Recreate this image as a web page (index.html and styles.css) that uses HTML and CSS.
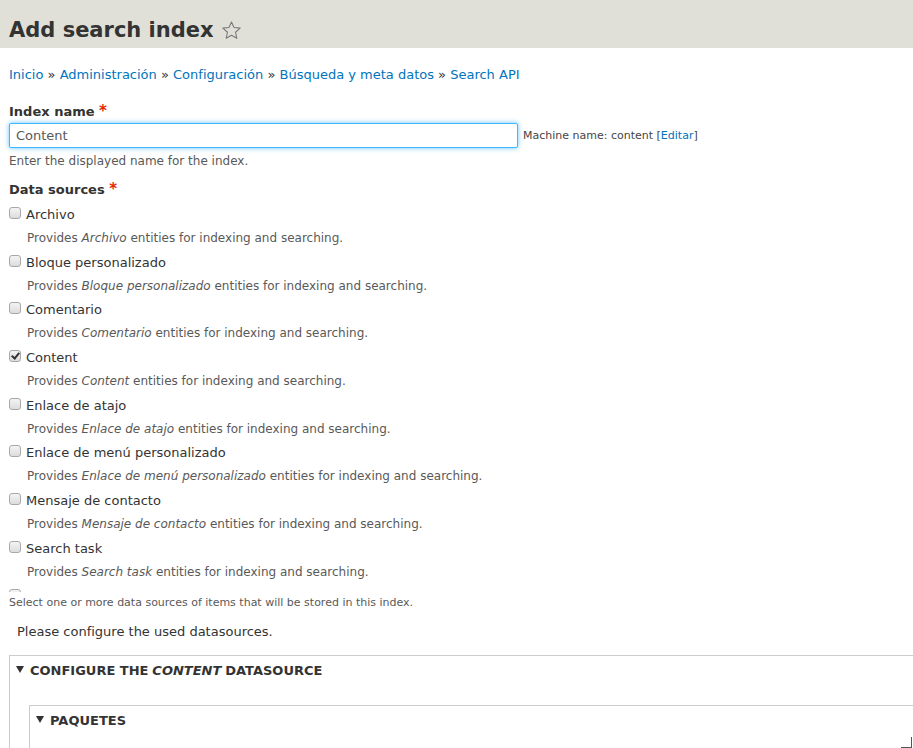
FILE: index.html
```html
<!DOCTYPE html>
<html lang="es">
<head>
<meta charset="utf-8">
<title>Add search index</title>
<link rel="stylesheet" href="styles.css">
</head>
<body>
<header class="header">
  <h1 class="page-title">Add search index
    <svg class="star" width="21" height="21" viewBox="0 0 24 24"><path d="M12 2.2l2.9 6.4 7 .7-5.3 4.7 1.5 6.9L12 17.4l-6.1 3.5 1.5-6.9L2.1 9.3l7-.7z" fill="none" stroke="#777" stroke-width="1.2" stroke-linejoin="round"/></svg>
  </h1>
</header>
<main class="page">
  <nav class="breadcrumb">
    <a href="#">Inicio</a> » <a href="#">Administración</a> » <a href="#">Configuración</a> » <a href="#">Búsqueda y meta datos</a> » <a href="#">Search API</a>
  </nav>

  <div class="form-item">
    <label class="label">Index name <span class="req">*</span></label>
    <div class="name-row">
      <input class="text-input" type="text" value="Content">
      <span class="machine">Machine name: content [<a href="#">Editar</a>]</span>
    </div>
    <div class="desc">Enter the displayed name for the index.</div>
  </div>

  <div class="form-item">
    <label class="label">Data sources <span class="req">*</span></label>
    <div class="checkboxes">
      <div class="cb-item"><label class="cb-label"><input type="checkbox"> Archivo</label><div class="cb-desc">Provides <em>Archivo</em> entities for indexing and searching.</div></div>
      <div class="cb-item"><label class="cb-label"><input type="checkbox"> Bloque personalizado</label><div class="cb-desc">Provides <em>Bloque personalizado</em> entities for indexing and searching.</div></div>
      <div class="cb-item"><label class="cb-label"><input type="checkbox"> Comentario</label><div class="cb-desc">Provides <em>Comentario</em> entities for indexing and searching.</div></div>
      <div class="cb-item"><label class="cb-label"><input type="checkbox" checked> Content</label><div class="cb-desc">Provides <em>Content</em> entities for indexing and searching.</div></div>
      <div class="cb-item"><label class="cb-label"><input type="checkbox"> Enlace de atajo</label><div class="cb-desc">Provides <em>Enlace de atajo</em> entities for indexing and searching.</div></div>
      <div class="cb-item"><label class="cb-label"><input type="checkbox"> Enlace de menú personalizado</label><div class="cb-desc">Provides <em>Enlace de menú personalizado</em> entities for indexing and searching.</div></div>
      <div class="cb-item"><label class="cb-label"><input type="checkbox"> Mensaje de contacto</label><div class="cb-desc">Provides <em>Mensaje de contacto</em> entities for indexing and searching.</div></div>
      <div class="cb-item"><label class="cb-label"><input type="checkbox"> Search task</label><div class="cb-desc">Provides <em>Search task</em> entities for indexing and searching.</div></div>
      <div class="cb-item"><label class="cb-label"><input type="checkbox" aria-label="Más"></label></div>
    </div>
    <div class="desc small">Select one or more data sources of items that will be stored in this index.</div>
  </div>

  <p class="notice">Please configure the used datasources.</p>

  <fieldset class="fs">
    <div class="legend"><span class="tri"></span>CONFIGURE THE <em>CONTENT</em> DATASOURCE</div>
    <fieldset class="fs inner">
      <div class="legend"><span class="tri"></span>PAQUETES</div>
      <span class="grip"></span>
    </fieldset>
  </fieldset>
</main>
</body>
</html>
```

FILE: styles.css
```css
html, body {
  margin: 0;
  padding: 0;
  overflow: hidden;
}
body {
  font-family: "DejaVu Sans", Verdana, sans-serif;
  font-size: 13px;
  line-height: 20px;
  color: #333;
  background: #fff;
  width: 913px;
  height: 748px;
}
a {
  color: #0074bd;
  text-decoration: none;
}
.header {
  background: #e0e0d8;
  height: 48px;
  padding: 0 9px;
  box-sizing: border-box;
}
.page-title {
  margin: 0;
  padding-top: 18px;
  font-size: 21px;
  line-height: 24px;
  font-weight: bold;
  color: #333;
  display: flex;
  align-items: center;
  gap: 7px;
}
.star {
  display: block;
}
.page {
  padding: 0 0 0 9px;
}
.breadcrumb {
  margin-top: 17px;
  line-height: 20px;
}
.form-item {
  margin-top: 16px;
}
.label {
  display: block;
  font-weight: bold;
  line-height: 20px;
}
.req {
  color: #e32700;
  font-size: 15px;
}
.name-row {
  display: flex;
  align-items: center;
  margin-top: 1px;
}
.text-input {
  width: 509px;
  height: 25px;
  box-sizing: border-box;
  border: 1px solid #40b6ff;
  border-radius: 2px;
  box-shadow: 0 0 5px rgba(64, 182, 255, 0.8);
  padding: 0 6px;
  font-family: "DejaVu Sans", Verdana, sans-serif;
  font-size: 13px;
  color: #595959;
  margin: 0;
  outline: none;
}
.machine {
  font-size: 11px;
  margin-left: 5px;
  color: #444;
}
.desc {
  font-size: 12px;
  line-height: 20px;
  color: #595959;
  margin-top: 3px;
}
.desc.small {
  font-size: 11px;
  margin-top: 1px;
}
.form-item + .form-item {
  margin-top: 8px;
}
.checkboxes {
  margin-top: 5px;
  height: 387px;
  overflow: hidden;
}
.cb-item {
  height: 47.7px;
}
.cb-label {
  display: flex;
  align-items: center;
  height: 20px;
}
.cb-label input {
  -webkit-appearance: none;
  appearance: none;
  margin: 0 5px 0 0;
  width: 12px;
  height: 12px;
  box-sizing: border-box;
  border: 1px solid #a8a8a8;
  border-radius: 3px;
  background: linear-gradient(#f4f4f4, #dcdcdc);
  position: relative;
  top: -2px;
  flex: none;
}
.cb-label input:checked::after {
  content: "";
  position: absolute;
  left: 3px;
  top: 0px;
  width: 3px;
  height: 6px;
  border: solid #333;
  border-width: 0 2px 2px 0;
  transform: rotate(40deg);
}
.cb-desc {
  margin-top: 3px;
  padding-left: 18px;
  font-size: 12px;
  line-height: 20px;
  color: #595959;
}
.notice {
  margin: 9px 0 0 8px;
  line-height: 20px;
}
.fs {
  margin: 13px 0 0 0;
  padding: 5px 6px 0;
  border: 1px solid #ccc;
  border-right: none;
  width: 920px;
  height: 200px;
  box-sizing: border-box;
  position: relative;
}
.fs.inner {
  margin: 24px 0 0 13px;
  padding: 5px 6px 0;
}
.legend {
  font-weight: bold;
  line-height: 20px;
  font-size: 13px;
  display: flex;
  align-items: center;
}
.legend em {
  font-style: italic;
  margin: 0 0.3em;
}
.tri {
  display: inline-block;
  width: 0;
  height: 0;
  border-left: 4px solid transparent;
  border-right: 4px solid transparent;
  border-top: 7px solid #333;
  margin: 0 6px 3px 0;
}
.grip {
  position: absolute;
  left: 871px;
  top: 31px;
  width: 10px;
  height: 10px;
  border-right: 1px solid #555;
  border-bottom: 1px solid #555;
}
```
